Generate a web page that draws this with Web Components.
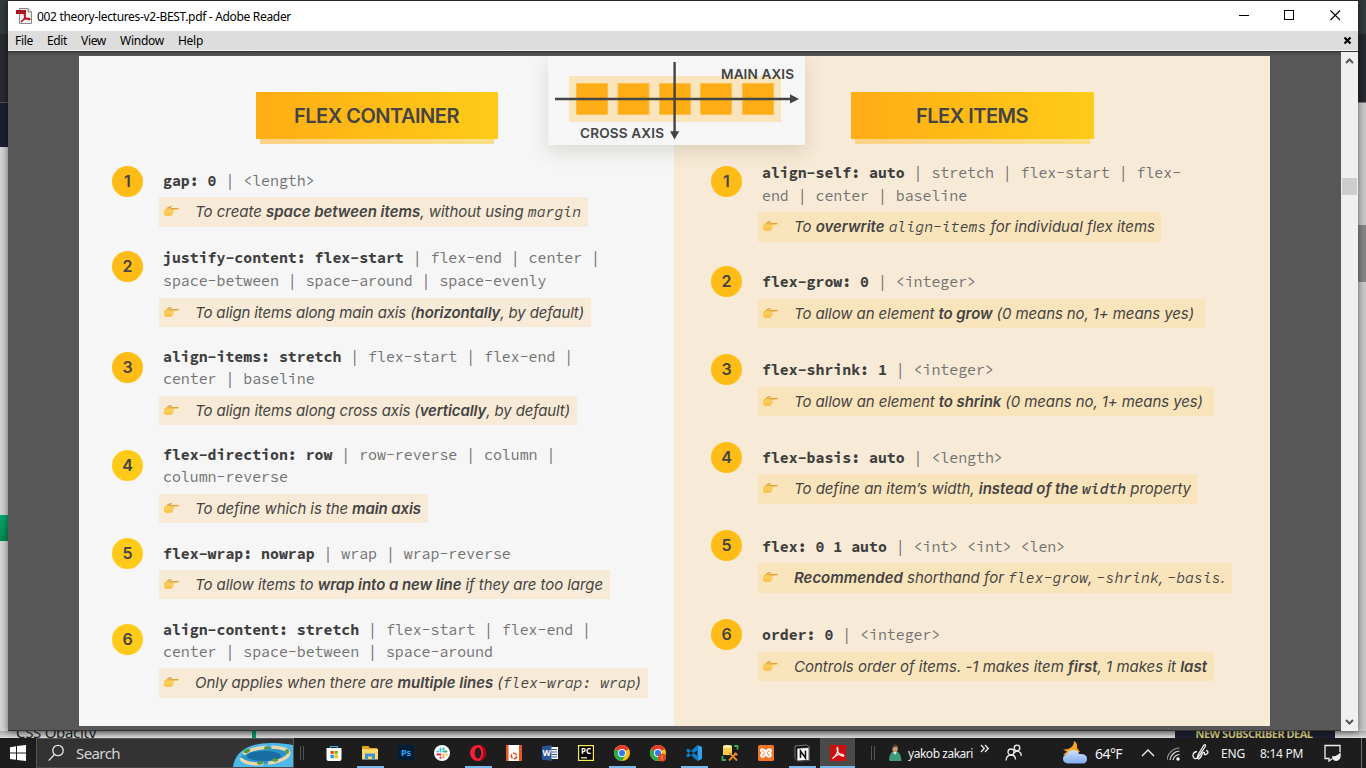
<!DOCTYPE html>
<html lang="en">
<head>
<meta charset="utf-8">
<title>002 theory-lectures-v2-BEST.pdf - Adobe Reader</title>
<style>
html,body{margin:0;height:100%;overflow:hidden;background:#dcdcdc}
body{font-family:"Noto Sans","Open Sans",sans-serif}
</style>
</head>
<body>
<desk-top></desk-top>
<script>
const define = (name, html, setup) => customElements.define(name, class extends HTMLElement {
  connectedCallback() {
    if (this.shadowRoot) return;
    const t = document.createElement('template');
    t.innerHTML = html;
    this.attachShadow({mode: 'open'}).append(t.content.cloneNode(true));
    if (setup) setup(this, this.shadowRoot);
  }
});

/* Spreads its text over a given width by adjusting the letter spacing. */
define('fit-text', `<style>:host{display:inline-block;white-space:pre;flex:none}span{display:inline-block}</style><span><slot></slot></span>`, (el, root) => {
  const w = +el.getAttribute('w'), s = root.querySelector('span');
  const n = el.textContent.length;
  s.style.letterSpacing = ((w - s.getBoundingClientRect().width) / n) + 'px';
  el.style.width = w + 'px';
});

define('num-badge', `<style>:host{display:flex;align-items:center;justify-content:center;width:31px;height:31px;border-radius:50%;background:var(--c,#ffbc16);color:#444;font:600 16px/30px Inter,sans-serif;padding-bottom:1px;box-sizing:border-box}</style><slot></slot>`);

define('point-hand', `<style>:host{display:block;width:17px;height:13px}svg{display:block}</style>
<svg width="17" height="13" viewBox="0 0 17 13"><defs><linearGradient id="g" x2="0" y2="1"><stop offset="0" stop-color="#eab04a"/><stop offset=".5" stop-color="#fdd05f"/><stop offset="1" stop-color="#f6bd45"/></linearGradient></defs>
<path d="M1 5 4.400 2.400Q6.500 1 8.600 1.300 9.200 2 7.800 3L15.400 2.900Q17 3.600 15.400 4.500L10.400 5.200Q11.400 6.300 10.400 7.200 10.700 8.600 9.600 9.200 9.300 10.600 8 10.700L3.500 10.900 1 9.800Z" fill="url(#g)"/><path d="M8.600 1.500 4.500 3M7.500 3.800 15 3.300" stroke="#c98a3c" stroke-width=".6" fill="none"/></svg>`);

define('section-title', `<style>:host{display:grid;width:var(--w,242px);height:52px;grid-template-rows:47px 5px;color:#444;font:600 20px Inter,sans-serif}
.b{background:linear-gradient(90deg,#ffad14,#ffcb18);display:flex;align-items:center;justify-content:center;padding:1px 1px 0 0;box-sizing:border-box}
.s{margin:0 4px;background:linear-gradient(90deg,#fbd187,#fbdf88)}</style><div class="b"><slot></slot></div><div class="s"></div>`);

define('prop-item', `<style>
:host{display:grid;grid-template-columns:31px 1fr;column-gap:20px;box-sizing:border-box;align-items:start}
.code{font:400 14.87px/var(--lh,22.5px) "Source Code Pro","Liberation Mono",monospace;color:#727272;white-space:pre;height:var(--note)}
.note{display:grid;grid-template-columns:17px auto;column-gap:15px;justify-content:start;align-items:center;box-sizing:border-box;height:var(--nh,29px);padding:0 0 var(--pb,0px) 4px;margin-left:-4px;background:var(--note-bg);width:var(--nw);font:italic 400 15px/20px Inter,sans-serif;color:#444}
:host([tall]){--nh:30px;--pb:1px}
num-badge{margin-top:var(--dy)}
</style><num-badge></num-badge><div><div class="code"><slot name="code"></slot></div><div class="note"><point-hand></point-hand><slot name="note"></slot></div></div>`,
(el, root) => { root.querySelector('num-badge').textContent = el.getAttribute('n'); });

define('axis-card', `<style>:host{display:block;width:257px;height:89px;background:#f6f6f6;box-shadow:0 6px 18px rgba(80,70,50,.17)}svg{display:block}text{font:600 13.6px Inter,sans-serif;fill:#444}</style>
<svg width="257" height="89"><rect x="21" y="20" width="212" height="46" fill="#fae4bb"/>
<g fill="#ffad14" stroke="#fdbc50" stroke-width="1"><rect x="28.5" y="27.500" width="31" height="31"/><rect x="70" y="27.500" width="31" height="31"/><rect x="111.500" y="27.500" width="31" height="31"/><rect x="152.500" y="27.500" width="31" height="31"/><rect x="194.500" y="27.500" width="31" height="31"/></g>
<path d="M7 43H243M126.600 6V76" stroke="#444" stroke-width="2.4"/><path d="M242 38.300 251 43 242 47.600ZM122 75.200H131.200L126.600 83.500Z" fill="#444"/>
<text x="173" y="23" textLength="73">MAIN AXIS</text><text x="32" y="82" textLength="84">CROSS AXIS</text></svg>`);

define('pdf-page', `<style>
:host{display:grid;grid-template-columns:595px 596px;width:1191px;height:670px;position:relative}
.l{background:#f6f6f6;--note-bg:#f7ead6}.r{background:#f7ead6;--note-bg:#fae4bb}
.col{display:flex;flex-direction:column;padding-left:33px;box-sizing:border-box;overflow:hidden}
.r{padding-left:37px}
section-title{margin-top:36px;flex:none}
.l section-title{margin-left:144px;margin-bottom:26px}.r section-title{--w:243px;margin-left:140px;margin-bottom:18px}
prop-item{flex:none;height:var(--h)}
axis-card{position:absolute;left:469px;top:0}
code{font:inherit;font-family:"Source Code Pro","Liberation Mono",monospace;font-size:14.8px;line-height:1}
b{font-weight:600}
[slot=code] b{font-weight:700;color:#3e3e3e}
</style>
<div class="col l"><section-title><fit-text w="165">FLEX CONTAINER</fit-text></section-title>
<prop-item n="1" tall style="--h:77px;--note:27px;--dy:-4.500px;--nw:429px"><div slot="code"><b>gap: 0</b> | &lt;length&gt;</div><fit-text slot="note" w="386">To create <b>space between items</b>, without using <code>margin</code></fit-text></prop-item>
<prop-item n="2" style="--h:99px;--note:51px;--dy:3.500px;--nw:432px"><div slot="code"><b>justify-content: flex-start</b> | flex-end | center |</div><div slot="code">space-between | space-around | space-evenly</div><fit-text slot="note" w="389">To align items along main axis (<b>horizontally</b>, by default)</fit-text></prop-item>
<prop-item n="3" style="--lh:22px;--h:98px;--note:50px;--dy:5.500px;--nw:418px"><div slot="code"><b>align-items: stretch</b> | flex-start | flex-end |</div><div slot="code">center | baseline</div><fit-text slot="note" w="375">To align items along cross axis (<b>vertically</b>, by default)</fit-text></prop-item>
<prop-item n="4" style="--lh:22px;--h:99px;--note:50px;--dy:6px;--nw:269px;--c:#ffca18"><div slot="code"><b>flex-direction: row</b> | row-reverse | column |</div><div slot="code">column-reverse</div><fit-text slot="note" w="226">To define which is the <b>main axis</b></fit-text></prop-item>
<prop-item n="5" style="--h:76px;--note:27px;--dy:-5px;--nw:451px;--c:#ffca18"><div slot="code"><b>flex-wrap: nowrap</b> | wrap | wrap-reverse</div><fit-text slot="note" w="408">To allow items to <b>wrap into a new line</b> if they are too large</fit-text></prop-item>
<prop-item n="6" tall style="--lh:22px;--h:99px;--note:49px;--dy:5px;--nw:489px;--c:#ffca18"><div slot="code"><b>align-content: stretch</b> | flex-start | flex-end |</div><div slot="code">center | space-between | space-around</div><fit-text slot="note" w="446">Only applies when there are <b>multiple lines</b> (<code>flex-wrap: wrap</code>)</fit-text></prop-item>
</div>
<div class="col r"><section-title><fit-text w="112">FLEX ITEMS</fit-text></section-title>
<prop-item n="1" tall style="--h:109px;--note:50px;--dy:3.500px;--nw:403px"><div slot="code"><b>align-self: auto</b> | stretch | flex-start | flex-</div><div slot="code">end | center | baseline</div><fit-text slot="note" w="361">To <b>overwrite</b> <code>align-items</code> for individual flex items</fit-text></prop-item>
<prop-item n="2" style="--h:88px;--note:28px;--dy:-5.500px;--nw:447px"><div slot="code"><b>flex-grow: 0</b> | &lt;integer&gt;</div><fit-text slot="note" w="400">To allow an element <b>to grow</b> (0 means no, 1+ means yes)</fit-text></prop-item>
<prop-item n="3" style="--h:88px;--note:28px;--dy:-5px;--nw:456px"><div slot="code"><b>flex-shrink: 1</b> | &lt;integer&gt;</div><fit-text slot="note" w="409">To allow an element <b>to shrink</b> (0 means no, 1+ means yes)</fit-text></prop-item>
<prop-item n="4" tall style="--h:89px;--note:27px;--dy:-5px;--nw:439px"><div slot="code"><b>flex-basis: auto</b> | &lt;length&gt;</div><fit-text slot="note" w="397">To define an item’s width, <b>instead of the <code>width</code></b> property</fit-text></prop-item>
<prop-item n="5" tall style="--h:88px;--note:27px;--dy:-6px;--nw:474px"><div slot="code"><b>flex: 0 1 auto</b> | &lt;int&gt; &lt;int&gt; &lt;len&gt;</div><fit-text slot="note" w="431"><b>Recommended</b> shorthand for <code>flex-grow</code>, <code>-shrink</code>, <code>-basis</code>.</fit-text></prop-item>
<prop-item n="6" style="--h:88px;--note:28px;--dy:-5.500px;--nw:456px"><div slot="code"><b>order: 0</b> | &lt;integer&gt;</div><fit-text slot="note" w="413">Controls order of items. -1 makes item <b>first</b>, 1 makes it <b>last</b></fit-text></prop-item>
</div>
<axis-card></axis-card>`);

define('scroll-bar', `<style>:host{display:grid;grid-template-rows:126px 17px 1fr 17px;width:17px;background:#f0f0f0}svg{display:block}i{background:#cdcdcd;margin:0 1px}</style>
<svg width="17" height="17"><path d="M5 11 8.500 7.500 12 11" fill="none" stroke="#555" stroke-width="2"/></svg><i></i><span></span><svg width="17" height="17"><path d="M5 6 8.500 9.500 12 6" fill="none" stroke="#555" stroke-width="2"/></svg>`);

define('reader-window', `<style>
:host{display:grid;grid-template-rows:30px 19px 2px 679px;width:1350px;box-sizing:border-box;border-top:1px solid #24272a;height:731px;background:#fff;box-shadow:0 1px 7px rgba(0,0,0,.55);color:#000}
.title{display:flex;align-items:center;background:#fff;font-size:12px;padding-left:8px}
.title .pdf{margin-right:5px}
.ctl{margin-left:auto}
.menu{background:#ddd;display:flex;align-items:center;font-size:12px;padding-left:7px}
.menu fit-text{margin-right:14px}.menu svg{margin-left:auto;margin-right:6px}
.rule{background:#333;border-top:1px solid #f4f4f4;box-sizing:border-box}
.view{display:grid;grid-template-columns:1333px 17px;background:#555;overflow:hidden}
.doc{padding:4px 0 4px 71px;border-bottom:1px solid #333;background:linear-gradient(#484848,#575757 4px)}
</style>
<div class="title"><svg class="pdf" width="16" height="18" viewBox="0 0 16 18"><path d="M3.500 1.500H12L15.500 5V16.500H3.500Z" fill="#f5f0f0" stroke="#888"/><path d="M12 1.500V5h3.500" fill="#ddd" stroke="#888"/><path d="M0 3h10v4H0Z" fill="#a81522"/><path d="M5 15c3-2 5-6 4-8-1-1-1 2 1 4s4 2 4 1-6-1-9 3" fill="none" stroke="#b41523" stroke-width="1.400"/></svg><fit-text w="254">002 theory-lectures-v2-BEST.pdf - Adobe Reader</fit-text>
<svg class="ctl" width="130" height="30"><path d="M11 14.500H21" stroke="#000"/><rect x="56.500" y="9.500" width="9" height="9" fill="none" stroke="#000"/><path d="M102.500 9.500 112 19M112 9.500 102.500 19" stroke="#000" stroke-width="1.100"/></svg></div>
<div class="menu"><fit-text w="18">File</fit-text><fit-text w="20">Edit</fit-text><fit-text w="25">View</fit-text><fit-text w="44">Window</fit-text><fit-text w="25">Help</fit-text><svg width="9" height="9"><path d="M1.500 1.500 7.500 7.500M7.500 1.500 1.500 7.500" stroke="#000" stroke-width="2.200"/></svg></div>
<div class="rule"></div><div class="view"><div class="doc"><pdf-page></pdf-page></div><scroll-bar></scroll-bar></div>`);

const chrome = `<circle cx="12" cy="12" r="8" fill="#fbc116"/><path d="M12 12 5.070 8A8 8 0 0 1 18.930 8Z" fill="#e33b2e"/><path d="M5.070 8A8 8 0 0 0 12 20L15.500 14 12 12Z" fill="#2da94f"/><circle cx="12" cy="12" r="4" fill="#fff"/><circle cx="12" cy="12" r="3.100" fill="#3579e8"/>`;
const ICONS = {
 store:`<path d="M8.500 7V5.500H15.500V7" fill="none" stroke="#2bb4f0" stroke-width="1.200"/><path d="M4.500 7H19.500V18Q19.500 20 17.500 20H6.500Q4.500 20 4.500 18Z" fill="#fff"/><path d="M8.500 10H11.800V13.300H8.500Z" fill="#f25022"/><path d="M12.500 10H15.800V13.300H12.500Z" fill="#7fba00"/><path d="M8.500 14H11.800V17.300H8.500Z" fill="#00a4ef"/><path d="M12.500 14H15.800V17.300H12.500Z" fill="#ffb900"/>`,
 folder:`<path d="M4 5H10.500L12 7H19V9H4Z" fill="#e2a317"/><path d="M4 8H20V18.500H4Z" fill="#ffd869"/><path d="M7 12.500H17V19H14V15.500H10V19H7Z" fill="#3b92da"/>`,
 ps:`<rect x="4" y="4" width="16" height="15.500" rx="2.500" fill="#001e36"/><text x="12" y="15" text-anchor="middle" style="font:700 9px 'Noto Sans',sans-serif" fill="#31a8ff">Ps</text>`,
 slack:`<circle cx="12" cy="12" r="8" fill="#fff"/><g fill="none" stroke-width="2" stroke-linecap="round"><path d="M10.500 7.500V10.500M7.500 10.500H8" stroke="#36c5f0"/><path d="M13.500 10.500H16.500M13.500 7.500V8" stroke="#2eb67d"/><path d="M13.500 13.500V16.500M16.500 13.500H16.700" stroke="#ecb22e"/><path d="M10.500 13.500H7.500M10.500 16.500V16.700" stroke="#e01e5a"/></g>`,
 opera:`<circle cx="12" cy="12" r="8" fill="#fa1e35"/><path d="M14 4.300A8 8 0 0 1 14 19.700L17 15V8Z" fill="#a70014"/><ellipse cx="12" cy="12" rx="3.300" ry="5.600" fill="#1f1f1f"/>`,
 ubuntu:`<path d="M4 4H20V20H4Z" fill="#fff"/><path d="M4 4H6.500V20H4ZM17 4H20V20H17Z" fill="#e95420"/><circle cx="12" cy="15" r="2.700" fill="none" stroke="#e95420" stroke-width="1.600" stroke-dasharray="4.500 1.150"/>`,
 word:`<path d="M12 6H20V18H12Z" fill="#fff"/><path d="M13.500 8.500H19M13.500 11H19M13.500 13.500H19M13.500 16H19" stroke="#2b579a" stroke-width="1.200"/><path d="M4 5.500 13.500 4V20L4 18.500Z" fill="#2b579a"/><text x="8.700" y="15.200" text-anchor="middle" style="font:700 8.500px 'Noto Sans',sans-serif" fill="#fff">W</text>`,
 pycharm:`<rect x="4.600" y="4.600" width="14.800" height="14.800" fill="#000" stroke="#f6ef52" stroke-width="1.200"/><text x="12" y="13.200" text-anchor="middle" style="font:700 8px 'Noto Sans',sans-serif" fill="#fff">PC</text><path d="M7 16.800H13" stroke="#fff" stroke-width="1.200"/>`,
 chrome, chrome2: chrome + `<circle cx="16" cy="16.500" r="4" fill="#e6491f"/><path d="M15.500 14.500h1v4h-1z" fill="#f3a183"/>`,
 code:`<path d="M15.500 4 20 6V18L15.500 20Z" fill="#2fa4ec"/><path d="M15.500 4V9L6 16.500 4.300 15 4.300 14ZM15.500 20V15L6 7.500 4.300 9V10Z" fill="#0a7fcf"/>`,
 db:`<path d="M5 5Q10 3 14 5V14H5Z" fill="#f4cf51"/><ellipse cx="9.500" cy="5.500" rx="4.500" ry="1.500" fill="#fff0aa"/><path d="M16 5H19.500V8.500M4.500 15V19H8" stroke="#3eaa4b" stroke-width="1.800" fill="none"/><path d="M11.500 12 19 19.500M18.500 12 11 19.500M16.500 12 19.500 14" stroke="#e98a22" stroke-width="1.800"/>`,
 xampp:`<rect x="4" y="4" width="16" height="16" rx="1.500" fill="#f37623"/><path d="M8.300 8.200Q6.500 8.200 7 10 8 11.500 10 12 7 12.500 7 14.500 7.200 16 8.800 15.800 11 15.500 12 12 13 15.500 15.200 15.800 17 15.500 17 14 16.500 12.200 14 12 17 11.500 17 9.500 16.700 8.200 15.200 8.200 13 8.500 12 12 11 8.500 8.300 8.200Z" fill="none" stroke="#fff" stroke-width="1.900"/>`,
 notion:`<path d="M5 5 16.500 4 19.500 6V19.500L7.500 20 5 17Z" fill="#111" stroke="#ddd" stroke-width=".5"/><path d="M7 7.200 19 6.500V19.300L7 20Z" fill="#fff" stroke="#111" stroke-width=".7"/><path d="M10.500 17V10L15.500 17V9.500" stroke="#111" stroke-width="1.600" fill="none"/>`,
 acrobat:`<rect x="4" y="4" width="16" height="16" fill="#ce0f0f"/><path d="M6.500 17.500C10 15.500 13 9 11.500 6.500 10 7 12 12 14.500 14S19 15 17 13.500 9 14.500 6.500 17.500Z" fill="none" stroke="#fff" stroke-width="1.200"/>`
};
define('app-icon', `<style>:host{display:grid;grid-template-rows:28px 2px;width:36px;height:30px;justify-items:center}:host([front]){background:#4a4a4a;width:35px}svg{display:block;margin:3px 0 0}
i{width:27px;height:2px}:host([open]) i{background:#76b9ed}:host([front]) i{width:35px}</style><svg width="24" height="24" viewBox="0 0 24 24"></svg><i></i>`,
 (el, root) => { root.querySelector('svg').innerHTML = ICONS[el.getAttribute('name')]; });

define('search-box', `<style>:host{display:flex;align-items:center;box-sizing:border-box;width:258px;height:30px;background:#333;border:1px solid #565656;border-bottom-color:#484848;color:#d6d6d6;font-size:15px;overflow:hidden}
.m{margin:0 12px 0 11px}.art{margin-left:auto;align-self:flex-end}svg{display:block}</style>
<svg class="m" width="16" height="18"><circle cx="10" cy="6.500" r="5.200" fill="none" stroke="#e4e4e4" stroke-width="1.300"/><path d="M6.400 10.500.700 16.600" stroke="#e4e4e4" stroke-width="1.300"/></svg><fit-text w="44">Search</fit-text>
<svg class="art" width="60" height="24" viewBox="0 0 60 24"><path d="M0 24C2 8 16 0 38 0 50 0 60 2 60 2V24Z" fill="#4db9ea"/><ellipse cx="32" cy="12.500" rx="24" ry="8" fill="#2a93c8" stroke="#ead7ae" stroke-width="3.400" stroke-dasharray="24 5" transform="rotate(-6 32 13)"/><ellipse cx="31" cy="13" rx="17" ry="5" fill="#186ea2"/><g fill="#5b9a45"><ellipse cx="14" cy="8" rx="3.500" ry="1.800" transform="rotate(-25 14 8)"/><ellipse cx="34" cy="5" rx="3" ry="1.700"/><ellipse cx="54" cy="8.500" rx="2" ry="2.500"/><ellipse cx="27" cy="20" rx="3" ry="1.700"/><ellipse cx="42" cy="17" rx="3" ry="1.700"/></g></svg>`);

define('task-bar', `<style>
:host{display:grid;grid-template-columns:36px 258px 22px 540px 32px 18px 90px 60px 40px 37px 34px 25px 28px 37px 50px 1fr;height:30px;background:#1d1d1d;color:#f2f2f2;align-items:center;font-size:12px}
.apps{display:flex}svg{display:block}.t{font-size:14px}
.end{display:flex;justify-content:space-between;align-items:center}.end i{width:1px;height:30px;background:#707070;margin-right:4px}
.user{display:flex;align-items:center;gap:7px}
</style>
<svg width="36" height="30"><path d="M10 9.200 16 8.300V14.600H10ZM17 8.100 26 7V14.600H17ZM10 15.600H16V21.800L10 20.900ZM17 15.600H26V23.100L17 22Z" fill="#fff"/></svg>
<search-box></search-box>
<svg width="22" height="30"><path d="M6.500 8V22M9.500 8V22" stroke="#555"/></svg>
<div class="apps"><app-icon name="store"></app-icon><app-icon name="folder" open></app-icon><app-icon name="ps"></app-icon><app-icon name="slack"></app-icon><app-icon name="opera" open></app-icon><app-icon name="ubuntu"></app-icon><app-icon name="word"></app-icon><app-icon name="pycharm"></app-icon><app-icon name="chrome" open></app-icon><app-icon name="chrome2"></app-icon><app-icon name="code" open></app-icon><app-icon name="db"></app-icon><app-icon name="xampp"></app-icon><app-icon name="notion" open></app-icon><app-icon name="acrobat" open front></app-icon></div>
<svg width="32" height="30"><path d="M15.500 8V22M18.500 8V22" stroke="#555"/></svg>
<svg width="18" height="30"><path d="M1 22Q1.500 15 5 13.500L9 13.500Q13 15 13.500 23H2Z" fill="#3f9b78"/><path d="M5 14 7 17 9 13.500Z" fill="#eee"/><ellipse cx="7" cy="10.500" rx="2.800" ry="3.700" fill="#c99a70"/><path d="M4 11Q3 6.500 7 6.500T10 9Q7 8 5.500 9.500Z" fill="#4a3426"/></svg>
<div class="user"><fit-text w="65" style="margin-left:2px">yakob zakari</fit-text><svg width="10" height="18"><path d="M1 1 4.300 4.500 1 8M5 1 8.300 4.500 5 8" fill="none" stroke="#eee" stroke-width="1.300"/></svg></div>
<svg width="60" height="30"><g fill="none" stroke="#eee" stroke-width="1.300" transform="translate(10 0)"><circle cx="5" cy="14" r="3"/><path d="M0 22.500Q.500 17 5 17T9.500 21.500"/><circle cx="11" cy="10" r="2.800"/><path d="M8 15Q11 11 15 15.500V18"/></g></svg>
<svg width="40" height="30"><defs><linearGradient id="w" x2="0" y2="1"><stop stop-color="#cfe0fd"/><stop offset="1" stop-color="#82adf2"/></linearGradient></defs><path d="M18 3Q22 5 21 10L24 14 13 17 7 17 11 13.500 7 11.500 12 11Q18 9 18 3Z" fill="#f6a51c"/><path d="M12 25.500Q7 25 7 20.500 7 17 11 16.500 12 12 17 12T23 16Q31 15.500 31 20.500T26.500 25.500Z" fill="url(#w)"/></svg>
<fit-text class="t" w="27" style="margin-left:-1px">64°F</fit-text>
<svg width="34" height="30"><path d="M9 18 15 12 21 18" fill="none" stroke="#eee" stroke-width="1.400"/></svg>
<svg width="25" height="30"><g fill="none" stroke="#ddd" stroke-width="1.200" transform="translate(-1 0)"><path d="M1 22A13 13 0 0 1 13.500 10" stroke="#999"/><path d="M4 22A10 10 0 0 1 13.500 13"/><path d="M7 22A7 7 0 0 1 13.500 16.500"/></g><circle cx="11" cy="21" r="1.700" fill="#fff"/></svg>
<svg width="28" height="30"><path d="M5 13.500Q1 14 1 18 2 22.500 6 19.500L13 9Q14.500 6 12 7L6.500 16Q4.500 20 6.500 21 9 20 10 16 12 12.500 12.500 15.500 12 18 15.500 15.500 17 13 14 12.500" fill="none" stroke="#eee" stroke-width="1.300"/></svg>
<fit-text w="24" style="margin-left:1px">ENG</fit-text>
<fit-text w="43" style="margin-left:3px">8:14 PM</fit-text>
<div class="end"><svg width="34" height="30" style="margin-left:17px"><path d="M16 14V7.500H1V20.500H5V23L8.500 20.500" fill="none" stroke="#eee" stroke-width="1.300"/><path d="M8 18Q13 19 16.500 14 18 21 13 23 8 23 8 18Z" fill="#eee"/></svg><i></i></div>`);

define('desk-top', `<style>
:host{display:grid;grid-template-columns:8px 1350px 8px;grid-template-rows:731px 7px 30px;width:1366px;height:768px;overflow:hidden}
.left{background:linear-gradient(#34393c 34px,#292a2f 34px,#292a2f 102px,#555 102px,#555 103px,#1d202d 103px,#1d202d 147px,#d2d2d2 147px,#d2d2d2 515px,#04aa6d 515px,#04884f 541px,#d4d4d4 541px)}
.right{background:linear-gradient(#34393c 34px,#26282d 34px,#26282d 102px,#c9c9c9 103px,#c9c9c9 225px,#858585 225px,#858585 282px,#c9c9c9 282px)}
reader-window{z-index:1}
.peek{grid-column:1/4;display:grid;grid-template-columns:252px 4px 919px 160px 31px;background:linear-gradient(#aaa,#dedede);overflow:hidden;height:7px}
.peek div{height:7px;overflow:hidden}
.g{background:#05965f}.ad{background:#1d2030;color:#d7ca7b;font:700 11px/6px "Noto Sans",sans-serif;display:flex;justify-content:center}
.css{color:#222;font:15px/2px "Noto Sans",sans-serif;padding-left:16px}.w{padding-left:51px}
task-bar{grid-column:1/4}
</style><div class="left"></div><reader-window></reader-window><div class="right"></div>
<div class="peek"><div class="css"><fit-text w="80">CSS Opacity</fit-text></div><div class="g"></div><div class="w"><svg width="100" height="7"><path d="M3 0Q5 3 8 0" stroke="#c33" stroke-width="1.500" fill="none"/><path d="M60 0V2" stroke="#669" stroke-width="1.500"/><path d="M82 0Q81 2 78 2" stroke="#333" stroke-width="1.500" fill="none"/></svg></div><div class="ad"><fit-text w="117" style="margin-right:2px">NEW SUBSCRIBER DEAL</fit-text></div><div></div></div>
<task-bar></task-bar>`);
</script>
</body>
</html>
